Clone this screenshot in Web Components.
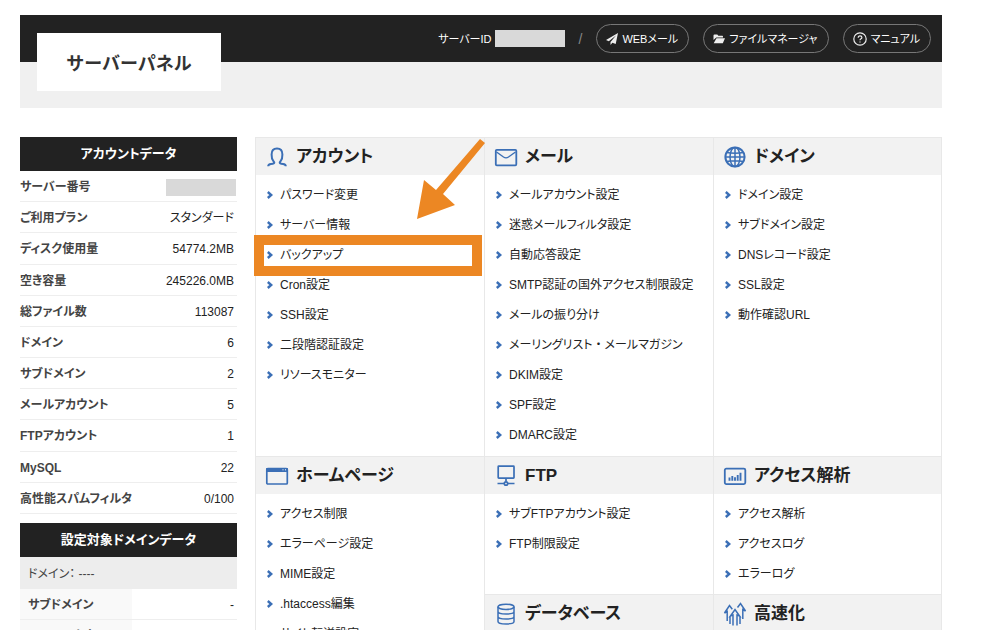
<!DOCTYPE html>
<html lang="ja">
<head>
<meta charset="utf-8">
<meta name="viewport" content="width=device-width, initial-scale=1">
<title>サーバーパネル</title>
<style>
  html, body { margin: 0; }
  body {
    background: #fff;
    color: #222;
    font: 12px/18px "Liberation Sans", "Noto Sans CJK JP", sans-serif;
    font-feature-settings: "palt";
    --dark: #222;
    --band: #f2f2f2;
    --line: #e8e8e8;
    --blue: #3b6fb6;
    --accent: #ec8723;
    --mask: #d9d9d9;
  }
  .dot { font-feature-settings: normal; }
</style>
</head>
<body>
<panel-page>
  <panel-header slot="header">
    <span slot="title">サーバーパネル</span>
    <span slot="id">サーバーID</span>
    <pill-link icon="plane">WEBメール</pill-link>
    <pill-link icon="folder">ファイルマネージャ</pill-link>
    <pill-link icon="help">マニュアル</pill-link>
  </panel-header>

  <account-table slot="side"></account-table>
  <domain-table slot="side"></domain-table>

  <menu-section icon="user">
    <span slot="title">アカウント</span>
    <menu-link>パスワード変更</menu-link>
    <menu-link>サーバー情報</menu-link>
    <menu-link>バックアップ</menu-link>
    <menu-link>Cron設定</menu-link>
    <menu-link>SSH設定</menu-link>
    <menu-link>二段階認証設定</menu-link>
    <menu-link>リソースモニター</menu-link>
    <guide-callout slot="overlay"></guide-callout>
  </menu-section>
  <menu-section icon="mail">
    <span slot="title">メール</span>
    <menu-link>メールアカウント設定</menu-link>
    <menu-link>迷惑メールフィルタ設定</menu-link>
    <menu-link>自動応答設定</menu-link>
    <menu-link>SMTP認証の国外アクセス制限設定</menu-link>
    <menu-link>メールの振り分け</menu-link>
    <menu-link>メーリングリスト<span class="dot">・</span>メールマガジン</menu-link>
    <menu-link>DKIM設定</menu-link>
    <menu-link>SPF設定</menu-link>
    <menu-link>DMARC設定</menu-link>
  </menu-section>
  <menu-section icon="globe">
    <span slot="title">ドメイン</span>
    <menu-link>ドメイン設定</menu-link>
    <menu-link>サブドメイン設定</menu-link>
    <menu-link>DNSレコード設定</menu-link>
    <menu-link>SSL設定</menu-link>
    <menu-link>動作確認URL</menu-link>
  </menu-section>
  <menu-section icon="window" tall>
    <span slot="title">ホームページ</span>
    <menu-link>アクセス制限</menu-link>
    <menu-link>エラーページ設定</menu-link>
    <menu-link>MIME設定</menu-link>
    <menu-link>.htaccess編集</menu-link>
    <menu-link>サイト転送設定</menu-link>
  </menu-section>
  <menu-section icon="ftp">
    <span slot="title">FTP</span>
    <menu-link>サブFTPアカウント設定</menu-link>
    <menu-link>FTP制限設定</menu-link>
  </menu-section>
  <menu-section icon="chart">
    <span slot="title">アクセス解析</span>
    <menu-link>アクセス解析</menu-link>
    <menu-link>アクセスログ</menu-link>
    <menu-link>エラーログ</menu-link>
  </menu-section>
  <menu-section icon="database">
    <span slot="title">データベース</span>
  </menu-section>
  <menu-section icon="arrows">
    <span slot="title">高速化</span>
  </menu-section>
</panel-page>

<script>
const define = (name, html, setup) => {
  const template = document.createElement('template');
  template.innerHTML = html;
  customElements.define(name, class extends HTMLElement {
    constructor() {
      super();
      this.attachShadow({ mode: 'open' }).append(template.content.cloneNode(true));
    }
    connectedCallback() { if (setup) setup(this, this.shadowRoot); }
  });
};

/* 24 x 24 section icons, 12 x 12 and 14 x 14 button icons */
const ICONS = {
  user: [24, '<path d="M3.200 21.200c0-1.600 1-2.200 2.800-2.300 2 0 3.300-.4 3.300-1.300 0-.6-.5-1-1.200-1.900C7 14.300 6.600 12.300 6.600 9.500 6.600 5.800 8.600 3.500 12 3.500s5.400 2.300 5.400 6c0 2.800-.4 4.800-1.500 6.200-.7.900-1.200 1.300-1.200 1.900 0 .9 1.300 1.300 3.300 1.300 1.800.1 2.800.7 2.800 2.300" stroke-width="2"/>'],
  mail: [24, '<rect x="1.800" y="4.800" width="20.500" height="15.500" rx="1" stroke-width="1.800"/><path d="M2.500 7l7 5q2.500 1.700 5 0l7-5" stroke-width="1.400"/>'],
  globe: [24, '<circle cx="12" cy="12" r="9.600" stroke-width="2"/><ellipse cx="12" cy="12" rx="5" ry="9.600" stroke-width="1.500"/><path d="M12 2v20M2 12h20M3.500 7.500q8.500 1.500 17 0M3.500 16.500q8.500-1.500 17 0" stroke-width="1.500"/>'],
  window: [24, '<rect x="1.800" y="4.500" width="20.500" height="15.500" rx="1" stroke-width="1.700"/><path d="M1.500 4.500h21v3h-21z" fill="currentColor" stroke-width="1"/><path d="M17.500 5.800h1M20 5.800h1" stroke="#fff" stroke-width="1"/>'],
  ftp: [24, '<rect x="4.200" y="2.200" width="15.800" height="12" rx=".6" stroke-width="1.700"/><path d="M12 14v3.500M3.500 19.500h6.500M14 19.500h6.500" stroke-width="1.700"/><circle cx="12" cy="19.500" r="1.700" stroke-width="1.700"/>'],
  chart: [24, '<rect x="1.800" y="4.600" width="20.500" height="15.500" rx="1.500" stroke-width="1.800"/><path d="M6.500 16.800v-3.200M9.300 16.800v-4.800M12 16.800v-3.600M14.700 16.800v-5.800M17.500 16.800v-8" stroke-width="1.900"/>'],
  database: [24, '<ellipse cx="12" cy="4.800" rx="8" ry="2.600" stroke-width="1.500"/><path d="M4 4.800v14.600c0 1.500 3.500 2.500 8 2.500s8-1 8-2.500V4.800M4 9.500c0 1.500 3.500 2.500 8 2.500s8-1 8-2.500M4 14.500c0 1.500 3.500 2.500 8 2.500s8-1 8-2.500" stroke-width="1.500"/>'],
  arrows: [24, '<path d="M10 23.500v-10.500l-2.500 1L12 7.500l4.500 6.500-2.500-1v10.500M4.200 19v-9.500L1.500 11 6.500 3.500l2.800 3.700M14.500 5.500l3-4 5 7.500-2.700-1.500v9.500M7 14.500v7.500M17 14.500v7.500" stroke-width="1.500"/>'],
  plane: [12, '<path d="M12 0L0 7l2.800 1.300L10 2.500 4.500 9v3L6.400 9.700 9.700 11z" fill="currentColor" stroke="none"/>'],
  folder: [12, '<path d="M.5 7V2.500q0-1 1-1h2.800l1 1.300h4q.7 0 .7.700v1H3.200zM3.500 5.300H12L9.800 10.300H.7z" fill="currentColor" stroke="none"/>'],
  help: [14, '<circle cx="7" cy="7" r="6.200" stroke-width="1.200"/><path d="M5.200 5.700q0-1.900 1.900-1.900 1.800 0 1.800 1.600 0 1-1.200 1.600-.7.400-.7 1.200M7 9.400v1.200" stroke-width="1.200"/>']
};

define('panel-icon', `
  <style>
    :host { display: inline-flex; flex: none; }
    svg { display: block; fill: none; stroke: currentColor; }
  </style>
  <svg aria-hidden="true"></svg>`, (host, root) => {
  const [size, shape] = ICONS[host.getAttribute('name')];
  const svg = root.querySelector('svg');
  svg.setAttribute('viewBox', `0 0 ${size} ${size}`);
  svg.setAttribute('width', size);
  svg.setAttribute('height', size);
  svg.innerHTML = shape;
});

/* Puts the icon named by the host's attribute at the start of its label */
const addIcon = (host, label) => {
  const icon = document.createElement('panel-icon');
  icon.setAttribute('name', host.getAttribute('icon'));
  label.prepend(icon);
};

define('panel-page', `
  <style>
    :host { display: block; box-sizing: border-box; height: calc(100vh - 1px); padding: 15px 58px 0 20px; overflow: hidden; }
    .columns { display: flex; align-items: flex-start; gap: 18px; margin-top: 29px; }
    aside { display: flex; flex-direction: column; gap: 9px; flex: 0 0 217px; }
    main {
      flex: 1; min-width: 0; display: grid;
      grid-template-columns: repeat(3, minmax(0, 1fr));
      grid-template-rows: minmax(319px, auto) auto 1fr;
    }
  </style>
  <slot name="header"></slot>
  <div class="columns">
    <aside><slot name="side"></slot></aside>
    <main><slot></slot></main>
  </div>`);

define('panel-header', `
  <style>
    :host { display: block; position: relative; background: #f0f0f0; padding-bottom: 46px; }
    .bar {
      display: flex; align-items: center; justify-content: flex-end; gap: 14px;
      box-sizing: border-box; height: 47px; padding-right: 11px;
      background: var(--dark); color: #fff; font-size: 11px;
    }
    h1 {
      position: absolute; left: 17px; top: 18px; margin: 0; width: 184px;
      background: #fff; color: #333; text-align: center;
      font: 700 18px/58px "Noto Sans CJK JP", sans-serif;
    }
    .id { display: flex; align-items: center; gap: 3px; }
    .mask { width: 70px; height: 17px; background: var(--mask); }
    .slash { color: #888; font-size: 14px; }
  </style>
  <header>
    <h1><slot name="title"></slot></h1>
    <div class="bar">
      <span class="id"><slot name="id"></slot><span class="mask"></span></span>
      <span class="slash">/</span>
      <slot></slot>
    </div>
  </header>`);

define('pill-link', `
  <style>
    :host { display: block; }
    a {
      display: flex; align-items: center; gap: 4px; box-sizing: border-box; height: 29px; padding: 0 10px 0 9px;
      border: 1px solid #777; border-radius: 15px; color: #fff; text-decoration: none; white-space: nowrap;
    }
    panel-icon { color: #eee; }
  </style>
  <a href="#"><slot></slot></a>`, (host, root) => addIcon(host, root.querySelector('a')));

const TABLE_STYLE = `
    :host { display: block; }
    h2 { margin: 0; background: var(--dark); color: #fff; text-align: center; font-size: 13px; line-height: 34px; font-weight: 700; }
    table { width: 100%; border-collapse: separate; border-spacing: 0; }
    th, td { padding: 0; border-bottom: 1px solid #eee; }
    th { text-align: left; font-weight: 700; color: #444; }
    td { text-align: right; padding-right: 3px; }`;

define('account-table', `
  <style>${TABLE_STYLE}
    table { height: 343px; }
    th, td { padding-top: 2px; }
    td.masked { padding-right: 1px; }
    .mask { display: block; width: 70px; height: 17px; margin-left: auto; background: var(--mask); }
  </style>
  <h2>アカウントデータ</h2>
  <table>
    <tr><th scope="row">サーバー番号</th><td class="masked"><span class="mask"></span></td></tr>
    <tr><th scope="row">ご利用プラン</th><td>スタンダード</td></tr>
    <tr><th scope="row">ディスク使用量</th><td>54774.2MB</td></tr>
    <tr><th scope="row">空き容量</th><td>245226.0MB</td></tr>
    <tr><th scope="row">総ファイル数</th><td>113087</td></tr>
    <tr><th scope="row">ドメイン</th><td>6</td></tr>
    <tr><th scope="row">サブドメイン</th><td>2</td></tr>
    <tr><th scope="row">メールアカウント</th><td>5</td></tr>
    <tr><th scope="row">FTPアカウント</th><td>1</td></tr>
    <tr><th scope="row">MySQL</th><td>22</td></tr>
    <tr><th scope="row">高性能スパムフィルタ</th><td>0/100</td></tr>
  </table>`);

define('domain-table', `
  <style>${TABLE_STYLE}
    th { background: #f9f9f9; padding: 2px 0 0 8px; width: 104px; }
    th, td { height: 28px; }
    td { padding-top: 2px; }
    th.domain { background: #ededed; border: 0; font-weight: 400; height: 30px; }
  </style>
  <h2>設定対象ドメインデータ</h2>
  <table>
    <tr><th class="domain" colspan="2">ドメイン： ----</th></tr>
    <tr><th scope="row">サブドメイン</th><td>-</td></tr>
    <tr><th scope="row">メールアカウント</th><td></td></tr>
  </table>`);

define('menu-section', `
  <style>
    :host { display: block; position: relative; border-left: 1px solid var(--line); }
    :host([tall]) { grid-row: span 2; }
    :host([icon="globe"]), :host([icon="chart"]), :host([icon="arrows"]) { border-right: 1px solid var(--line); }
    :host([tall]) { grid-row: span 3; }
    h2 {
      display: flex; align-items: center; gap: 7px; box-sizing: border-box; height: 38px; margin: 0; padding: 0 9px;
      background: var(--band); border-top: 1px solid var(--line); font-size: 17px; line-height: 24px; font-weight: 700;
    }
    panel-icon { color: var(--blue); }
    .list { padding: 5px 0; }
  </style>
  <h2><slot name="title"></slot></h2>
  <div class="list" role="list"><slot></slot></div>
  <slot name="overlay"></slot>`, (host, root) => addIcon(host, root.querySelector('h2')));

define('menu-link', `
  <style>
    :host { display: block; }
    a { display: flex; align-items: center; gap: 7px; padding-left: 11px; line-height: 30px; color: inherit; text-decoration: none; white-space: nowrap; }
    svg { flex: none; fill: none; stroke: var(--blue); stroke-width: 2.4; }
  </style>
  <a href="#"><svg width="6" height="8" viewBox="0 0 6 8" aria-hidden="true"><path d="M.8 1l3.400 3L.8 7"/></svg><span><slot></slot></span></a>`,
  host => host.setAttribute('role', 'listitem'));

/* Orange frame round the backup entry, with the arrow that points at it */
define('guide-callout', `
  <style>
    :host { position: absolute; inset: 0; pointer-events: none; z-index: 1; }
    .frame { position: absolute; left: -2px; right: 2px; top: 98px; height: 41px; box-sizing: border-box; border: 10px solid var(--accent); }
    svg { position: absolute; right: -2px; top: 0; fill: var(--accent); }
  </style>
  <svg width="70" height="84" viewBox="0 0 70 84" aria-hidden="true"><path d="M1 82L8 43l12 10L64 2l5 4-42 51 12 11z"/></svg>
  <div class="frame"></div>`);
</script>
</body>
</html>
